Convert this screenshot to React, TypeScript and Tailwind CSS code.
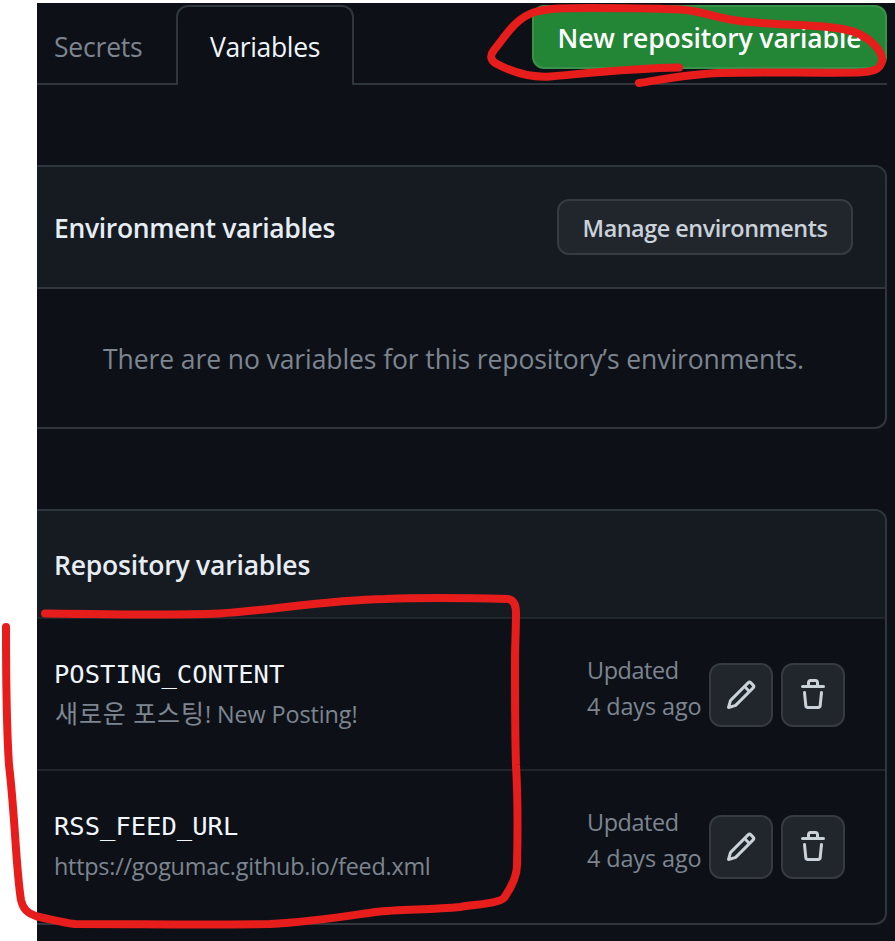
import type { ReactNode } from "react";

const PENCIL =
  "M11.013 1.427a1.75 1.75 0 0 1 2.474 0l1.086 1.086a1.75 1.75 0 0 1 0 2.474l-8.61 8.61c-.21.21-.47.364-.756.445l-3.251.93a.75.75 0 0 1-.927-.928l.929-3.25c.081-.286.235-.547.445-.758l8.61-8.61Zm.176 4.823L9.75 4.81l-6.286 6.287a.253.253 0 0 0-.064.108l-.558 1.953 1.953-.558a.253.253 0 0 0 .108-.064Zm1.238-3.763a.25.25 0 0 0-.354 0L10.811 3.75l1.439 1.44 1.263-1.263a.25.25 0 0 0 0-.354Z";
const TRASH =
  "M11 1.75V3h2.25a.75.75 0 0 1 0 1.5H2.75a.75.75 0 0 1 0-1.5H5V1.75C5 .784 5.784 0 6.75 0h2.5C10.216 0 11 .784 11 1.75ZM4.496 6.675l.66 6.6a.25.25 0 0 0 .249.225h5.19a.25.25 0 0 0 .249-.225l.66-6.6a.75.75 0 0 1 1.492.149l-.66 6.6A1.748 1.748 0 0 1 10.595 15h-5.19a1.75 1.75 0 0 1-1.741-1.575l-.66-6.6a.75.75 0 1 1 1.492-.15ZM6.5 1.75V3h3V1.75a.25.25 0 0 0-.25-.25h-2.5a.25.25 0 0 0-.25.25Z";

function IconButton({ label, path }: { label: string; path: string }) {
  return (
    <button
      aria-label={label}
      className="flex size-16 shrink-0 items-center justify-center rounded-xl border-2 border-[#363b42] bg-[#21262d] text-[#c9d1d9]"
    >
      <svg viewBox="0 0 16 16" className="size-8 fill-current">
        <path d={path} />
      </svg>
    </button>
  );
}

function VariableRow({ name, children }: { name: string; children: ReactNode }) {
  return (
    <div className="flex items-start pb-10 pl-[17px] pr-10">
      <div className="flex-1 whitespace-nowrap pt-9">
        <div className="font-['DejaVu_Sans_Mono',monospace] text-[25.5px] leading-[38px] text-[#f0f6fc]">{name}</div>
        <div className="h-9 pt-[3px] text-[23.4px] leading-9 text-[#7d8590]">{children}</div>
      </div>
      <div className="w-[122px] whitespace-nowrap pt-[33px] text-[23.4px] leading-9 text-[#7d8590]">
        <div className="tracking-[-0.4px]">Updated</div>
        <div className="tracking-[-0.1px]">4 days ago</div>
      </div>
      <div className="flex gap-2 pt-11">
        <IconButton label="Edit" path={PENCIL} />
        <IconButton label="Delete" path={TRASH} />
      </div>
    </div>
  );
}

export default function App() {
  return (
    <div className="relative h-[941px] w-[895px] overflow-hidden bg-white pl-[37px] pt-[3px] font-['Open_Sans','Noto_Sans_CJK_KR',sans-serif]">
      <main className="h-[938px] bg-[#0d1117] pr-2 pt-0.5">
        <nav className="flex h-20 items-stretch">
          <div className="flex w-[139px] items-center border-b-2 border-[#30363d] pl-[17px] pt-2 text-[26.5px] tracking-[-0.2px] text-[#7d8590]">
            <span>Secrets</span>
          </div>
          <div className="flex w-[178px] items-center justify-center rounded-t-xl border-2 border-b-0 border-[#30363d] pt-1 text-[26.5px] tracking-[-0.35px] text-[#f0f6fc]">
            <span>Variables</span>
          </div>
          <div className="flex flex-1 items-start justify-end border-b-2 border-[#30363d]">
            <button className="flex h-16 w-[355px] items-center justify-center rounded-xl border-2 border-[#39914a] bg-[#238636] pt-1 text-[26.5px] font-semibold tracking-[-0.1px] whitespace-nowrap text-white">
              New repository variable
            </button>
          </div>
        </nav>

        <section className="mt-20 h-[264px] overflow-hidden rounded-r-xl border-2 border-l-0 border-[#30363d]">
          <header className="flex h-[122px] items-center justify-between border-b-2 border-[#30363d] bg-[#161b22] pl-[17px] pr-8 text-[26.5px] font-semibold text-[#e6edf3]">
            <h2 className="pt-1 tracking-[-0.34px]">Environment variables</h2>
            <button className="flex h-14 w-[296px] items-center justify-center rounded-xl border-2 border-[#363b42] bg-[#21262d] pt-1 text-[23.4px] tracking-[-0.48px] whitespace-nowrap text-[#c9d1d9]">
              Manage environments
            </button>
          </header>
          <p className="pl-[66px] pt-[50px] text-[26.5px] leading-10 tracking-[-0.09px] whitespace-nowrap text-[#7d8590]">
            There are no variables for this repository’s environments.
          </p>
        </section>

        <section className="mt-20 h-[416px] overflow-hidden rounded-r-xl border-2 border-l-0 border-[#30363d]">
          <header className="flex h-[108px] items-center border-b-2 border-[#21262d] bg-[#161b22] pl-[17px] text-[26.5px] font-semibold text-[#e6edf3]">
            <h2 className="pt-1 tracking-[-0.2px]">Repository variables</h2>
          </header>
          <div className="divide-y-2 divide-[#21262d]">
            <VariableRow name="POSTING_CONTENT">
              <span className="pl-px font-['Noto_Sans_CJK_KR',sans-serif] text-[25px] leading-none tracking-[0.9px]">새로운 포스팅</span>
              <span className="tracking-[-0.1px]">! New Posting!</span>
            </VariableRow>
            <VariableRow name="RSS_FEED_URL">
              <span className="tracking-[-0.24px]">https://gogumac.github.io/feed.xml</span>
            </VariableRow>
          </div>
        </section>
      </main>

      {/* Hand-drawn marker annotations over the page */}
      <svg
        viewBox="0 0 895 941"
        className="pointer-events-none absolute inset-0 h-[941px] w-[895px] fill-none stroke-[#e71d1c] stroke-[8]"
        strokeLinecap="round"
        strokeLinejoin="round"
      >
        <path d="M679 67.500C635 68 590 73 550 76.500C528 78 510 71 496 63.500C490 60 490 55 494 50C505 37 515 18 535 12C550 8 565 8 590 8C620 8 655 8.500 680 9.500C705 11 720 20 750 22C790 26 820 24 847 30C867 34 883 50 882 61C880 70 873 72 858 72.500C810 73 760 72 720 73C690 74 665 79 639 83" />
        <path d="M45 613.500C105 614 160 616 220 613.500C275 610 325 600 385 599C430 597 470 598 508 599C514 600 516 605 516 613C516 630 515 645 515 662C515 700 515 735 516 765C518 800 518 825 517 865C517 875 511 888 504 898C499 903 480 904 460 907C430 910 400 909 375 912C340 917 310 922 270 924C205 925 140 924 75 924C60 922 50 919 37 916.500C27 913 23 909 21 900C16 870 15 815 9 765C6 720 6 680 6 627" />
      </svg>
    </div>
  );
}
